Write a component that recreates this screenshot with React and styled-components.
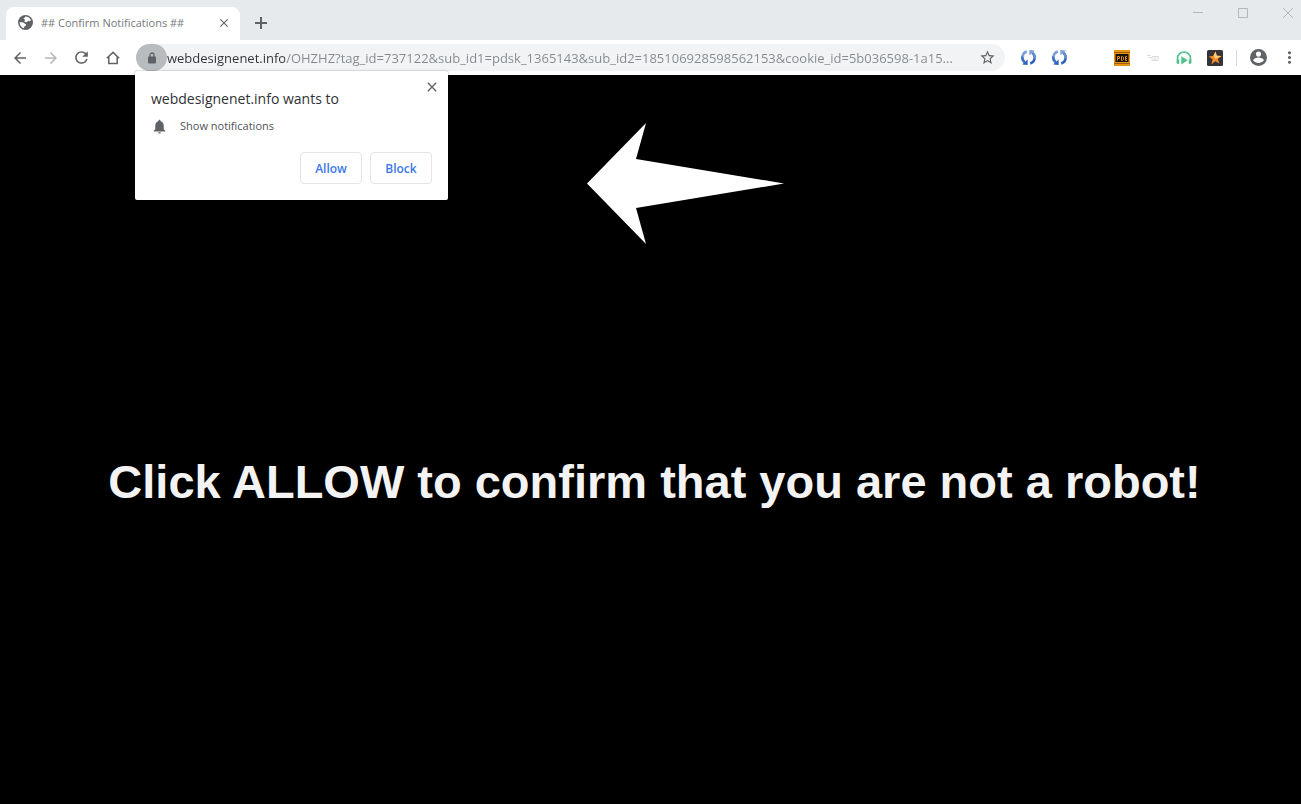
import React from 'react'

import styled, { createGlobalStyle } from 'styled-components'
import {
  MdArrowBack,
  MdArrowForward,
  MdClose,
  MdMoreVert,
  MdNotifications,
  MdRefresh,
  MdStarBorder,
} from 'react-icons/md'

const uiFont = '"Open Sans", "Noto Sans", sans-serif'
const iconGrey = '#5f6368'

const GlobalStyle = createGlobalStyle`
  * {
    box-sizing: border-box;
  }

  body {
    margin: 0;
    background: #000;
    font-family: ${uiFont};
  }

  button {
    padding: 0;
    border: 0;
    background: none;
    font-family: inherit;
  }
`

const Browser = styled.div`
  display: flex;
  flex-direction: column;
  min-height: 100vh;
`

const TabStrip = styled.header`
  display: flex;
  align-items: flex-end;
  height: 40px;
  padding-left: 6px;
  background: #e6eaed;
`

const Tab = styled.div`
  display: flex;
  align-items: center;
  width: 234px;
  height: 33px;
  padding: 0 8px 2px 12px;
  border-radius: 8px 8px 0 0;
  background: #fff;
  color: ${iconGrey};
`

const TabTitle = styled.span`
  flex: 1;
  margin-left: 8px;
  color: #75797d;
  font-size: 11px;
  line-height: 16px;
  white-space: nowrap;
`

const IconButton = styled.button`
  display: flex;
  flex: none;
  align-items: center;
  justify-content: center;
  width: ${({ $width }) => $width || 31}px;
  height: ${({ $height }) => $height || 28}px;
  color: ${({ $faded }) => ($faded ? '#b4b6b9' : iconGrey)};
`

const NewTab = styled(IconButton)`
  margin: 0 0 3px 5px;
`

const MenuButton = styled(IconButton)`
  margin-left: 3px;
`

const WindowControls = styled.div`
  display: flex;
  align-self: flex-start;
  gap: 19px;
  margin-left: auto;
`

const Toolbar = styled.nav`
  position: relative;
  z-index: 1;
  display: flex;
  align-items: center;
  height: 35px;
  padding-left: 4px;
  background: #fff;
`

const Omnibox = styled.div`
  position: relative;
  display: flex;
  flex: 1;
  align-items: center;
  min-width: 0;
  height: 27px;
  margin: 0 8px;
  padding-right: 2px;
  border-radius: 14px;
  background: #f1f3f4;
`

const SiteInfo = styled(IconButton)`
  border-radius: 14px;
  background: #b9bcbf;
`

/* the host part of the address is darker than its path */
const Address = styled.input`
  flex: 1;
  min-width: 0;
  height: 24px;
  padding: 0;
  border: 0;
  outline: 0;
  background: linear-gradient(to right, #303236 118px, #85898d 118px);
  background-clip: text;
  color: #85898d;
  -webkit-text-fill-color: transparent;
  font-family: ${uiFont};
  font-size: 13px;
  line-height: 24px;
  text-overflow: ellipsis;
`

const Divider = styled.span`
  flex: none;
  width: 1px;
  height: 16px;
  margin: 0 6px;
  background: #dadce0;
`

const Prompt = styled.section`
  position: absolute;
  top: 100%;
  left: -1px;
  width: 313px;
  padding: 16px;
  border-radius: 2px;
  background: #fff;
  box-shadow: 0 0 2px rgba(0, 0, 0, 0.4);
`

const PromptTitle = styled.h2`
  margin: 0;
  color: #303236;
  font-size: 14px;
  font-weight: 400;
  line-height: 24px;
`

const Permission = styled.p`
  display: flex;
  align-items: center;
  gap: 12px;
  margin: 5px 0 0;
  color: #505357;
  font-size: 11px;
  line-height: 20px;
`

const PromptClose = styled(IconButton)`
  position: absolute;
  top: 4px;
  right: 4px;
`

const Actions = styled.div`
  display: flex;
  justify-content: flex-end;
  gap: 8px;
  margin-top: 16px;
`

const ActionButton = styled.button`
  && {
    width: 62px;
    height: 32px;
    border: 1px solid #e3e5e8;
    border-radius: 4px;
    color: #3b78e7;
    font-size: 12px;
    font-weight: 600;
  }
`

const Page = styled.main`
  display: flex;
  flex: 1;
  flex-direction: column;
  align-items: center;
  padding: 48px 0 0 8px;
  background: #000;
`

const Arrow = styled.svg`
  width: 197px;
  height: 121px;
  margin-left: 61px;
`

const Message = styled.h1`
  margin: 210px 0 0;
  color: #f3f3f3;
  font-family: "Liberation Sans", Arial, sans-serif;
  font-size: 47px;
  font-weight: 700;
  line-height: 56px;
  text-align: center;
`

const LineIcon = styled.svg`
  fill: none;
  stroke: currentColor;
  stroke-width: ${({ $weight }) => $weight || 1};
`

const GlobeIcon = () => (
  <svg width="15" height="15" viewBox="0 0 16 16">
    <circle cx="8" cy="8" r="8" fill={iconGrey} />
    <path fill="#fff" d="M8 1.600c2.600.1 4.900 1.700 5.900 4.100l-1.500.9-1.700-.6-1.200 1.700-2.700-.4.600-2.300-1.600-.9z" />
    <path fill="#fff" d="M1.700 7.500 5.600 8l3 2-.5 1.800-1.400.4-.4 2C3.600 13.400 1.600 11 1.700 7.500z" />
  </svg>
)

const LockIcon = () => (
  <svg width="10" height="12" viewBox="0 0 10 12">
    <rect x="1" y="4.500" width="8" height="7" rx="1" fill={iconGrey} />
    <path d="M3 5V3a2 2 0 0 1 4 0v2" fill="none" stroke={iconGrey} strokeWidth="1.300" />
  </svg>
)

const ProfileIcon = () => (
  <svg width="17" height="17" viewBox="0 0 20 20">
    <circle cx="10" cy="10" r="10" fill={iconGrey} />
    <circle cx="10" cy="6" r="3" fill="#fff" />
    <path fill="#fff" d="M4 13.200c0-2 4-3.100 6-3.100s6 1.100 6 3.100a7.200 7.200 0 0 1-12 0z" />
  </svg>
)

const SyncIcon = () => (
  <svg width="17" height="17" viewBox="0 0 17 17" fill="none">
    <path d="M6.800 2.500A6.200 6.200 0 0 0 4.700 13.300" stroke="#7c9fd4" strokeWidth="2.400" />
    <path d="M2.300 7.500A6.200 6.200 0 0 0 4.700 13.300" stroke="#3f70c4" strokeWidth="2.400" />
    <path d="M7.600 10.400v5.600l-5.400-.6z" fill="#2c60bd" />
    <path d="M10.200 14.500A6.200 6.200 0 0 0 12.300 3.700" stroke="#2c60bd" strokeWidth="2.400" />
    <path d="M14.700 9.500A6.200 6.200 0 0 0 12.300 3.700" stroke="#6690d0" strokeWidth="2.400" />
    <path d="M9.400 6.600V1l5.400.6z" fill="#7c9fd4" />
  </svg>
)

const PdeIcon = () => (
  <svg width="16" height="16" viewBox="0 0 16 16">
    <path fill="#e8940f" d="M0 0h16v16H0z" />
    <path fill="#9a6015" d="M0 2h16v1H0zM0 13h16v1H0z" />
    <path fill="#17120c" d="M1.500 4h13v8h-13z" />
    <path
      fill="none"
      stroke="#df8b18"
      d="M3.500 10.500v-4h2v2h-2M7.500 6.500h1l1 1v2l-1 1h-1zM13 6.500h-1.500v4H13M11.500 8.500H13"
    />
  </svg>
)

const CameraIcon = () => (
  <svg width="12" height="8" viewBox="0 0 12 8" fill="none" stroke="#dcdcdc">
    <path d="M0 1.500h4M1.500 3.500h3M5 2.500h6v4H5z" />
    <circle cx="8" cy="4.500" r="1" />
  </svg>
)

const HeadphonesIcon = () => (
  <svg width="16" height="16" viewBox="0 0 16 16">
    <path
      d="M1.500 13V8.500a6.500 6.500 0 0 1 13 0V13"
      fill="none"
      stroke="#4fc18a"
      strokeWidth="1.600"
    />
    <path fill="#4fc18a" d="M.8 9.500h2.400V14H1.800l-1-1zM12.800 9.500h2.400V13l-1 1h-1.400zM5.300 6.200l6.400 4.100-6.400 4.100z" />
  </svg>
)

const StarIcon = () => (
  <svg width="16" height="16" viewBox="0 0 16 16">
    <rect width="16" height="16" rx="1.500" fill="#343438" />
    <path fill="#f58b2c" d="m8.500 1.500 1.300 4.300 4.700.2-3.600 2.900 1.500 4.700-4-2.400-4 3 1.200-4.900-4-2.800 4.700-.4z" />
    <path fill="#ffd071" d="m8.500 1.500 1.300 4.300 4.700.2-6 2.800-2-3z" />
  </svg>
)

const extensions = [
  { name: 'Sync', Icon: SyncIcon },
  { name: 'Sync tabs', Icon: SyncIcon },
  { name: 'Empty extension', Icon: () => null },
  { name: 'PDE', Icon: PdeIcon },
  { name: 'Capture', Icon: CameraIcon },
  { name: 'Music', Icon: HeadphonesIcon },
  { name: 'Favorites', Icon: StarIcon },
]

const url =
  'webdesignenet.info/OHZHZ?tag_id=737122&sub_id1=pdsk_1365143&sub_id2=185106928598562153&cookie_id=5b036598-1a15...'

const NotificationPrompt = () => (
  <Prompt role="dialog" aria-labelledby="prompt-title">
    <PromptTitle id="prompt-title">webdesignenet.info wants to</PromptTitle>
    <PromptClose aria-label="Close" $width={24} $height={24}>
      <MdClose size={16} />
    </PromptClose>
    <Permission>
      <MdNotifications size={17} color={iconGrey} />
      Show notifications
    </Permission>
    <Actions>
      <ActionButton>Allow</ActionButton>
      <ActionButton>Block</ActionButton>
    </Actions>
  </Prompt>
)

export default () => <Browser>
  <GlobalStyle />
  <TabStrip>
    <Tab>
      <GlobeIcon />
      <TabTitle>## Confirm Notifications ##</TabTitle>
      <IconButton aria-label="Close tab" $width={16}>
        <MdClose size={14} />
      </IconButton>
    </Tab>
    <NewTab aria-label="New tab">
      <LineIcon width="12" height="12" $weight={2}><path d="M6 0v12M0 6h12" /></LineIcon>
    </NewTab>
    <WindowControls>
      <IconButton aria-label="Minimize" $width={26} $height={26} $faded>
        <LineIcon width="10" height="10"><path d="M0 4.500h10" /></LineIcon>
      </IconButton>
      <IconButton aria-label="Maximize" $width={26} $height={26} $faded>
        <LineIcon width="10" height="10"><path d="M.5.500h9v9h-9z" /></LineIcon>
      </IconButton>
      <IconButton aria-label="Close window" $width={26} $height={26} $faded>
        <LineIcon width="10" height="10"><path d="m0 0 10 10M10 0 0 10" /></LineIcon>
      </IconButton>
    </WindowControls>
  </TabStrip>
  <Toolbar>
    <IconButton aria-label="Back"><MdArrowBack size={18} /></IconButton>
    <IconButton aria-label="Forward" $faded><MdArrowForward size={18} /></IconButton>
    <IconButton aria-label="Reload"><MdRefresh size={19} /></IconButton>
    <IconButton aria-label="Home">
      <LineIcon width="14" height="14" $weight={1.5}>
        <path d="M.8 7.200 7 1.400l6.200 5.800M2.800 6v6.500h8.400V6" />
      </LineIcon>
    </IconButton>
    <Omnibox>
      <SiteInfo aria-label="View site information" $height={27}><LockIcon /></SiteInfo>
      <Address aria-label="Address" defaultValue={url} />
      <IconButton aria-label="Bookmark this page"><MdStarBorder size={17} /></IconButton>
      <NotificationPrompt />
    </Omnibox>
    {extensions.map(({ name, Icon }) => (
      <IconButton key={name} aria-label={name}><Icon /></IconButton>
    ))}
    <Divider />
    <IconButton aria-label="Profile"><ProfileIcon /></IconButton>
    <MenuButton aria-label="Menu" $width={24}><MdMoreVert size={19} /></MenuButton>
  </Toolbar>
  <Page>
    <Arrow viewBox="0 0 197 121" aria-hidden="true">
      <path fill="#fff" d="M0 60.500 59 0 49 36l148 24.500L49 85l10 36z" />
    </Arrow>
    <Message>Click ALLOW to confirm that you are not a robot!</Message>
  </Page>
</Browser>
